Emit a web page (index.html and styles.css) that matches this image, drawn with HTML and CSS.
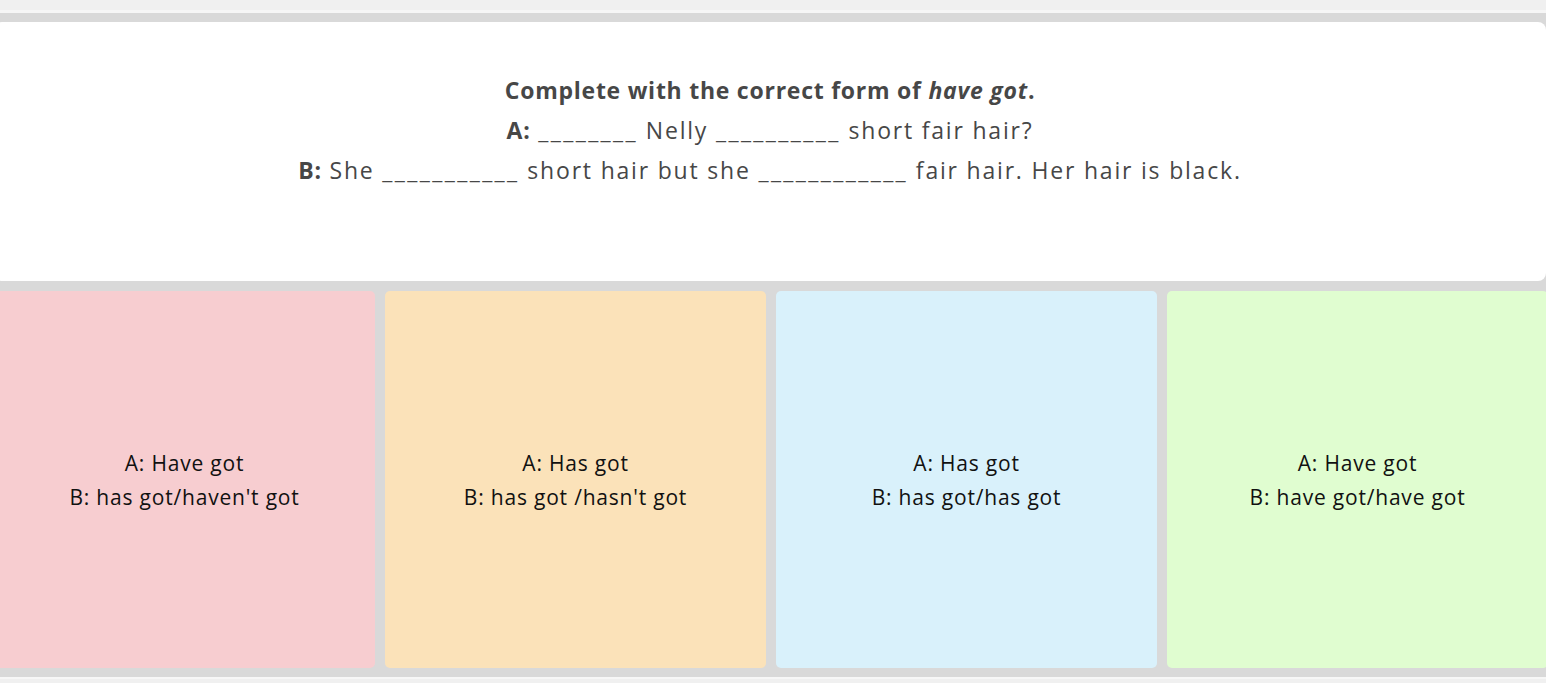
FILE: index.html
```html
<!doctype html>
<html lang="en">
  <head>
    <meta charset="UTF-8" />
    <meta name="viewport" content="width=device-width, initial-scale=1.0" />
    <title>Have got quiz</title>
    <link rel="stylesheet" href="styles.css">
  </head>
  <body>
    <div class="topbar"></div>

    <div class="stage">
      <div class="prompt">
        <p class="title">Complete with the correct form of <em>have got</em>.</p>
        <p><strong>A:</strong> <span class="blank">________</span> Nelly <span class="blank">__________</span> short fair hair?</p>
        <p><strong>B:</strong> She <span class="blank">___________</span> short hair but she <span class="blank">____________</span> fair hair. Her hair is black.</p>
      </div>

      <div class="options">
        <button class="option pink">A: Have got<br>B: has got/haven't got</button>
        <button class="option peach">A: Has got<br>B: has got /hasn't got</button>
        <button class="option blue">A: Has got<br>B: has got/has got</button>
        <button class="option green">A: Have got<br>B: have got/have got</button>
      </div>
    </div>
  </body>
</html>
```

FILE: styles.css
```css
body {
  margin: 0;
  background: #f0f0f0;
  font-family: "Open Sans", Roboto, sans-serif;
  overflow: hidden;
}
.topbar {
  height: 10px;
  border-bottom: 3px solid #f6f6f6;
}
.stage {
  background: #d9d9d9;
  width: 1554px;
  margin-left: -6px;
  padding: 9px 0;
  border-bottom: 2px solid #f7f7f7;
}
.prompt {
  background: #fff;
  height: 259px;
  box-sizing: border-box;
  padding-top: 48px;
  border-radius: 8px;
  margin: 0 2px 10px 0;
  text-align: center;
  color: #474747;
  font-size: 23px;
  font-weight: 500;
  letter-spacing: 1.8px;
}
.prompt p {
  margin: 0;
  line-height: 40px;
}
.prompt .title {
  font-weight: bold;
  letter-spacing: 0.75px;
}
.prompt strong {
  font-weight: bold;
  letter-spacing: 0.75px;
}
.blank {
  letter-spacing: 2.4px;
}
.options {
  display: grid;
  grid-template-columns: repeat(4, 1fr);
  gap: 10px;
  height: 377px;
}
.option {
  border: none;
  border-radius: 5px;
  font-family: inherit;
  font-size: 21px;
  font-weight: 500;
  letter-spacing: 0.8px;
  line-height: 34px;
  color: #111;
  padding: 0;
  cursor: pointer;
}
.pink { background: #f7cdd0; }
.peach { background: #fbe2b9; }
.blue { background: #d9f1fb; }
.green { background: #e0fdd0; }
```
